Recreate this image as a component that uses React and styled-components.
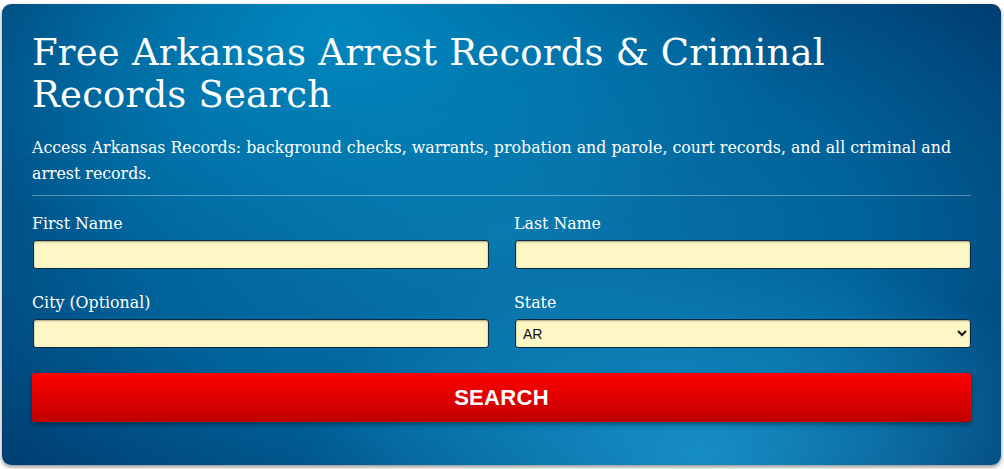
import React from 'react'
import styled, { createGlobalStyle } from 'styled-components'

const Global = createGlobalStyle`
  body {
    margin: 0;
    background: #fff;
    font-family: "DejaVu Serif", "Liberation Serif", serif;
  }
`

const Card = styled.div`
  margin: 4px 3px 5px 2px;
  padding: 28px 30px 43px 30px;
  border-radius: 9px;
  color: #fff;
  box-shadow: 0 2px 4px rgba(0, 0, 0, 0.45);
  background:
    radial-gradient(ellipse 40% 45% at 70% 98%, rgba(30, 160, 215, 0.75), rgba(30, 160, 215, 0) 100%),
    radial-gradient(ellipse 45% 55% at 33% 5%, rgba(0, 140, 195, 0.9), rgba(0, 140, 195, 0) 100%),
    radial-gradient(ellipse 80% 95% at 50% 50%, #0a78ad 0%, #00639a 45%, #003f73 80%, #002a55 100%);
`

const Title = styled.h1`
  margin: 0;
  font-weight: normal;
  font-size: 37px;
  line-height: 42px;
  letter-spacing: 0.2px;
`

const Lead = styled.p`
  margin: 19px 0 0;
  font-size: 15.8px;
  line-height: 26px;
`

const Divider = styled.hr`
  margin: 8px 0 18px;
  border: 0;
  border-top: 1px solid rgba(255, 255, 255, 0.35);
`

const Grid = styled.div`
  display: grid;
  grid-template-columns: 1fr 1fr;
  column-gap: 25px;
  row-gap: 24px;
`

const Field = styled.div`
  display: flex;
  flex-direction: column;
`

const Label = styled.label`
  font-size: 15.8px;
  line-height: 20px;
  margin-bottom: 6px;
`

const Input = styled.input`
  box-sizing: border-box;
  height: 29px;
  margin: 0 0 0 1px;
  padding: 0 6px;
  border: 1px solid #0d2a44;
  border-radius: 3px;
  background: #fdf6c5;
  box-shadow: inset 0 1px 2px rgba(0, 0, 0, 0.35);
  font-family: "Liberation Sans", Arial, sans-serif;
  font-size: 14px;
  outline: none;
`

const Select = styled.select`
  box-sizing: border-box;
  height: 29px;
  margin: 0 0 0 1px;
  padding: 0 3px;
  border: 1px solid #0d2a44;
  border-radius: 3px;
  background: #fdf6c5;
  color: #111;
  box-shadow: inset 0 1px 2px rgba(0, 0, 0, 0.35);
  font-family: "Liberation Sans", Arial, sans-serif;
  font-size: 14px;
`

const SearchButton = styled.button`
  display: block;
  width: 100%;
  height: 49px;
  margin-top: 25px;
  border: 0;
  border-radius: 3px;
  background: linear-gradient(to bottom, #ff0000 0%, #e00000 50%, #bd0000 100%);
  box-shadow: 0 2px 5px rgba(0, 0, 0, 0.45);
  color: #fff;
  font-family: "Liberation Sans", Arial, sans-serif;
  font-weight: bold;
  font-size: 22px;
  letter-spacing: 0.3px;
  cursor: pointer;
`

export default function App() {
  return (
    <>
      <Global />
      <Card>
        <Title>Free Arkansas Arrest Records &amp; Criminal Records Search</Title>
        <Lead>
          Access Arkansas Records: background checks, warrants, probation and parole, court records, and all criminal and arrest records.
        </Lead>
        <Divider />
        <Grid>
          <Field>
            <Label>First Name</Label>
            <Input type="text" />
          </Field>
          <Field>
            <Label>Last Name</Label>
            <Input type="text" />
          </Field>
          <Field>
            <Label>City (Optional)</Label>
            <Input type="text" />
          </Field>
          <Field>
            <Label>State</Label>
            <Select defaultValue="AR">
              <option value="AL">AL</option>
              <option value="AK">AK</option>
              <option value="AZ">AZ</option>
              <option value="AR">AR</option>
              <option value="CA">CA</option>
            </Select>
          </Field>
        </Grid>
        <SearchButton>SEARCH</SearchButton>
      </Card>
    </>
  )
}
